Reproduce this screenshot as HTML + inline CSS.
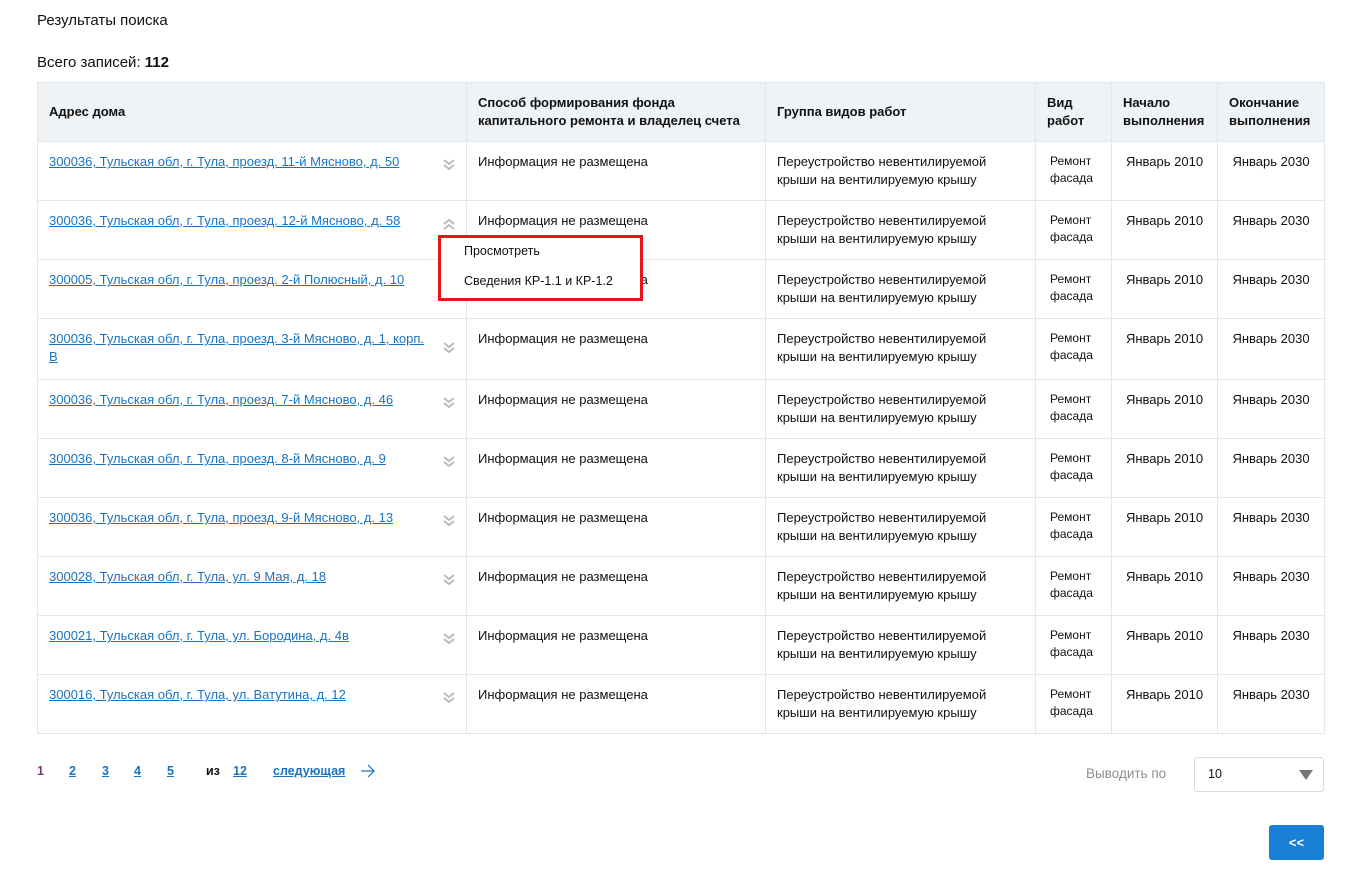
<!DOCTYPE html>
<html><head><meta charset="utf-8"><style>
body{margin:0;background:#fff;font-family:"Liberation Sans",Arial,sans-serif;color:#111;width:1353px;height:876px;position:relative;overflow:hidden}
.t1{position:absolute;left:37px;top:12px;font-size:15px}
.t2{position:absolute;left:37px;top:54px;font-size:15px}
table{position:absolute;left:37px;top:82px;border-collapse:collapse;width:1287px;font-size:13px;table-layout:fixed}
td,th{border:1px solid #e3e6ea;vertical-align:top;padding:11px 11px 0 11px;line-height:18px;text-align:left}
th{background:#f0f3f6;font-weight:bold;vertical-align:middle;padding-top:0;padding-right:6px;height:58px}
tr.r td{height:47px}
td.a{position:relative;padding-right:36px}
a{color:#1a73c2;text-decoration:underline}
.ch{position:absolute;right:10px;top:16px;width:14px;height:14px}
td.c{text-align:center;padding-left:6px;padding-right:6px}
td.v{padding-left:14px;padding-right:4px;font-size:12px;line-height:17px}
.pop{position:absolute;left:438px;top:235px;width:199px;height:60px;border:3px solid #e8141b;background:#fff;font-size:12.5px}
.pop div{position:absolute;left:23px}
.pg{position:absolute;top:764px;font-size:12.5px;font-weight:bold}
.pg a{color:#1a73c2}
.sel{position:absolute;left:1194px;top:757px;width:128px;height:33px;border:1px solid #d8dbde;border-radius:3px;font-size:12.5px}
.btn{position:absolute;left:1269px;top:825px;width:55px;height:35px;background:#1a7fd6;border-radius:3px;color:#fff;font-weight:bold;font-size:13px;text-align:center;line-height:35px}
</style></head><body>
<div class="t1">Результаты поиска</div>
<div class="t2">Всего записей: <b>112</b></div>
<table>
<colgroup><col style="width:429px"><col style="width:299px"><col style="width:270px"><col style="width:76px"><col style="width:106px"><col style="width:107px"></colgroup>
<tr><th>Адрес дома</th><th>Способ формирования фонда капитального ремонта и владелец счета</th><th>Группа видов работ</th><th>Вид работ</th><th>Начало выполнения</th><th>Окончание выполнения</th></tr>
<tr class="r"><td class="a"><a>300036, Тульская обл, г. Тула, проезд. 11-й Мясново, д. 50</a><svg class="ch" viewBox="0 0 14 14"><path d="M2 2l5 4 5-4M2 7l5 4 5-4" fill="none" stroke="#bbb" stroke-width="2"/></svg></td><td>Информация не размещена</td><td>Переустройство невентилируемой крыши на вентилируемую крышу</td><td class="v">Ремонт фасада</td><td class="c">Январь 2010</td><td class="c">Январь 2030</td></tr>
<tr class="r"><td class="a"><a>300036, Тульская обл, г. Тула, проезд. 12-й Мясново, д. 58</a><svg class="ch" viewBox="0 0 14 14"><path d="M2 7l5-4 5 4M2 12l5-4 5 4" fill="none" stroke="#bbb" stroke-width="2"/></svg></td><td>Информация не размещена</td><td>Переустройство невентилируемой крыши на вентилируемую крышу</td><td class="v">Ремонт фасада</td><td class="c">Январь 2010</td><td class="c">Январь 2030</td></tr>
<tr class="r"><td class="a"><a>300005, Тульская обл, г. Тула, проезд. 2-й Полюсный, д. 10</a></td><td>Информация не размещена</td><td>Переустройство невентилируемой крыши на вентилируемую крышу</td><td class="v">Ремонт фасада</td><td class="c">Январь 2010</td><td class="c">Январь 2030</td></tr>
<tr class="r"><td class="a" style="height:49px"><a>300036, Тульская обл, г. Тула, проезд. 3-й Мясново, д. 1, корп. В</a><svg class="ch" style="top:22px" viewBox="0 0 14 14"><path d="M2 2l5 4 5-4M2 7l5 4 5-4" fill="none" stroke="#bbb" stroke-width="2"/></svg></td><td>Информация не размещена</td><td>Переустройство невентилируемой крыши на вентилируемую крышу</td><td class="v">Ремонт фасада</td><td class="c">Январь 2010</td><td class="c">Январь 2030</td></tr>
<tr class="r"><td class="a"><a>300036, Тульская обл, г. Тула, проезд. 7-й Мясново, д. 46</a><svg class="ch" viewBox="0 0 14 14"><path d="M2 2l5 4 5-4M2 7l5 4 5-4" fill="none" stroke="#bbb" stroke-width="2"/></svg></td><td>Информация не размещена</td><td>Переустройство невентилируемой крыши на вентилируемую крышу</td><td class="v">Ремонт фасада</td><td class="c">Январь 2010</td><td class="c">Январь 2030</td></tr>
<tr class="r"><td class="a"><a>300036, Тульская обл, г. Тула, проезд. 8-й Мясново, д. 9</a><svg class="ch" viewBox="0 0 14 14"><path d="M2 2l5 4 5-4M2 7l5 4 5-4" fill="none" stroke="#bbb" stroke-width="2"/></svg></td><td>Информация не размещена</td><td>Переустройство невентилируемой крыши на вентилируемую крышу</td><td class="v">Ремонт фасада</td><td class="c">Январь 2010</td><td class="c">Январь 2030</td></tr>
<tr class="r"><td class="a"><a>300036, Тульская обл, г. Тула, проезд. 9-й Мясново, д. 13</a><svg class="ch" viewBox="0 0 14 14"><path d="M2 2l5 4 5-4M2 7l5 4 5-4" fill="none" stroke="#bbb" stroke-width="2"/></svg></td><td>Информация не размещена</td><td>Переустройство невентилируемой крыши на вентилируемую крышу</td><td class="v">Ремонт фасада</td><td class="c">Январь 2010</td><td class="c">Январь 2030</td></tr>
<tr class="r"><td class="a"><a>300028, Тульская обл, г. Тула, ул. 9 Мая, д. 18</a><svg class="ch" viewBox="0 0 14 14"><path d="M2 2l5 4 5-4M2 7l5 4 5-4" fill="none" stroke="#bbb" stroke-width="2"/></svg></td><td>Информация не размещена</td><td>Переустройство невентилируемой крыши на вентилируемую крышу</td><td class="v">Ремонт фасада</td><td class="c">Январь 2010</td><td class="c">Январь 2030</td></tr>
<tr class="r"><td class="a"><a>300021, Тульская обл, г. Тула, ул. Бородина, д. 4в</a><svg class="ch" viewBox="0 0 14 14"><path d="M2 2l5 4 5-4M2 7l5 4 5-4" fill="none" stroke="#bbb" stroke-width="2"/></svg></td><td>Информация не размещена</td><td>Переустройство невентилируемой крыши на вентилируемую крышу</td><td class="v">Ремонт фасада</td><td class="c">Январь 2010</td><td class="c">Январь 2030</td></tr>
<tr class="r"><td class="a"><a>300016, Тульская обл, г. Тула, ул. Ватутина, д. 12</a><svg class="ch" viewBox="0 0 14 14"><path d="M2 2l5 4 5-4M2 7l5 4 5-4" fill="none" stroke="#bbb" stroke-width="2"/></svg></td><td>Информация не размещена</td><td>Переустройство невентилируемой крыши на вентилируемую крышу</td><td class="v">Ремонт фасада</td><td class="c">Январь 2010</td><td class="c">Январь 2030</td></tr>
</table>
<div class="pop"><div style="top:6px">Просмотреть</div><div style="top:36px">Сведения КР-1.1 и КР-1.2</div></div>
<div class="pg" style="left:37px;color:#7a3b6b">1</div>
<div class="pg" style="left:69px"><a>2</a></div>
<div class="pg" style="left:102px"><a>3</a></div>
<div class="pg" style="left:134px"><a>4</a></div>
<div class="pg" style="left:167px"><a>5</a></div>
<div class="pg" style="left:206px">из</div>
<div class="pg" style="left:233px"><a>12</a></div>
<div class="pg" style="left:273px"><a>следующая</a></div>
<svg style="position:absolute;left:360px;top:764px" width="16" height="14" viewBox="0 0 16 14"><path d="M1 7h13M8 1l6 6-6 6" fill="none" stroke="#1a73c2" stroke-width="1.2"/></svg>
<div style="position:absolute;left:1086px;top:766px;font-size:13.5px;color:#8a8e93">Выводить по</div>
<div class="sel"><span style="position:absolute;left:13px;top:9px">10</span><svg style="position:absolute;right:10px;top:12px" width="14" height="10"><path d="M0 0h14L7 10z" fill="#777"/></svg></div>
<div class="btn">&lt;&lt;</div>
</body></html>
